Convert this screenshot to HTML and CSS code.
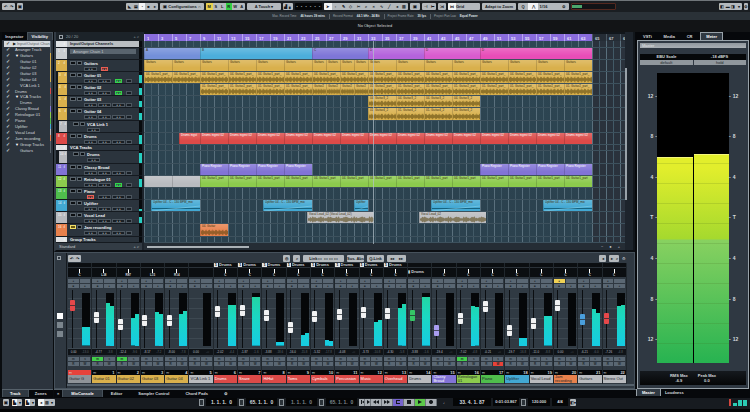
FILE: index.html
```html
<!doctype html>
<html lang="en">

<head>
    <meta charset="UTF-8" />
    <meta name="viewport" content="width=device-width, initial-scale=1.0" />
    <title>Project</title>
    <link rel="stylesheet" href="styles.css">
</head>

<body>
    <header class="toolbar">
        <div class="toolbar-left" id="tools-left"></div>
        <div class="toolbar-main" id="tools-main"></div>
        <div class="toolbar-right" id="tools-right"></div>
    </header>
    <div class="info-line">
        <span>Max. Record Time <b>46 hours 39 mins</b></span>
        <span>Record Format <b>44.1 kHz - 24 Bit</b></span>
        <span>Project Frame Rate <b>30 fps</b></span>
        <span>Project Pan Law <b>Equal Power</b></span>
    </div>
    <div class="status-line">No Object Selected</div>

    <main class="workspace">
        <aside class="zone left-zone">
            <nav class="tabs">
                <button type="button">Inspector</button>
                <button type="button" class="active">Visibility</button>
            </nav>
            <div class="visibility" id="visibility"></div>
            <nav class="tabs bottom-tabs">
                <button type="button" class="active">Track</button>
                <button type="button">Zones</button>
            </nav>
        </aside>

        <section class="zone center-zone">
            <div class="arrange">
                <div class="track-list">
                    <div class="track-list-head"><i class="mini-box"></i><span>20 / 20</span><span class="push">+ ⌕</span></div>
                    <div class="rows" id="tracks"></div>
                    <div class="track-list-foot"><span>Standard</span><span class="push">+ ⌕</span></div>
                </div>
                <div class="timeline">
                    <div class="ruler" id="ruler"></div>
                    <div class="rows lanes" id="lanes"></div>
                    <div class="h-scroll"><i></i><span>−</span><span>●</span><span>+</span></div>
                    <div class="playhead"></div>
                </div>
                <div class="v-scroll"><i></i></div>
            </div>
            <div class="mixer">
                <div class="mixer-side">
                    <i class="mini-box"></i>
                    <button type="button" class="lit" aria-label="Faders"></button>
                    <button type="button" aria-label="Inserts"></button>
                    <button type="button" aria-label="Sends"></button>
                </div>
                <div class="mixer-body">
                    <div class="mixer-bar" id="mixer-bar"></div>
                    <div class="channels" id="channels"></div>
                </div>
            </div>
            <nav class="tabs bottom-tabs">
                <button type="button">×</button>
                <button type="button" class="active">MixConsole</button>
                <button type="button">Editor</button>
                <button type="button">Sampler Control</button>
                <button type="button">Chord Pads</button>
                <button type="button">⚙</button>
            </nav>
        </section>

        <aside class="zone right-zone">
            <nav class="tabs">
                <button type="button">VSTi</button>
                <button type="button">Media</button>
                <button type="button">CR</button>
                <button type="button" class="active">Meter</button>
            </nav>
            <div class="meter-panel">
                <div class="meter-name">Master</div>
                <div class="meter-scale"><span>EBU Scale</span><span>-18 dBFS</span></div>
                <div class="meter-buttons">
                    <button type="button">default</button>
                    <button type="button">hold</button>
                </div>
                <div class="big-meter">
                    <ol class="scale"><li>12</li><li>8</li><li>4</li><li>T</li><li>4</li><li>8</li><li>12</li></ol>
                    <div class="bars">
                        <div class="bar left-bar"></div>
                        <div class="bar right-bar"></div>
                    </div>
                    <ol class="scale scale-right"><li>12</li><li>8</li><li>4</li><li>T</li><li>4</li><li>8</li><li>12</li></ol>
                </div>
                <div class="meter-read">
                    <div>RMS Max<br>-6.9</div>
                    <div>Peak Max<br>0.0</div>
                </div>
            </div>
            <nav class="tabs bottom-tabs">
                <button type="button" class="active">Master</button>
                <button type="button">Loudness</button>
            </nav>
        </aside>
    </main>

    <footer class="transport">
        <div class="transport-left" id="transport-left"></div>
        <div class="transport-main">
            <i class="locator"></i><output class="time">1. 1. 1.&nbsp; 0</output>
            <i class="locator"></i><output class="time">65. 1. 1.&nbsp; 0</output>
            <i class="locator"></i><output class="time dim">1. 1. 1.&nbsp; 0</output>
            <i class="locator"></i><output class="time dim">65. 1. 1.&nbsp; 0</output>
            <div class="transport-buttons" id="transport-buttons"></div>
            <span class="note">♩</span>
            <output class="time position">33. 4. 1. 87</output>
            <output class="time clock">0:01:03.867</output>
            <i class="locator"></i><output class="time tempo">120.000</output>
            <output class="time sign">4/4</output>
            <button type="button" class="tool">◧▾</button>
        </div>
        <div class="mini-meter"><i></i><i></i><i></i></div>
    </footer>
    <script src="script.js"></script>
</body>

</html>
```

FILE: styles.css
```css
* {
    box-sizing: border-box;
}

body {
    margin: 0;
    min-height: 100vh;
    display: flex;
    flex-direction: column;
    background: #07090c;
    color: #d5dade;
    font-family: "Liberation Sans", Arial, sans-serif;
    font-size: 4px;
    line-height: 5px;
    overflow: hidden;
}

button {
    font: inherit;
    color: inherit;
    background: none;
    border: 0;
    padding: 0;
    margin: 0;
    white-space: nowrap;
    overflow: hidden;
}

svg {
    display: block;
}

/* top toolbar */
.toolbar {
    height: 12px;
    border-top: 1px solid #70767a;
    background: #1a1e22;
    display: flex;
    align-items: center;
    padding: 0 2px;
}

.toolbar-left {
    width: 124px;
}

.toolbar-left,
.toolbar-main,
.toolbar-right,
.transport-left {
    display: flex;
    gap: 2px;
}

.toolbar-right {
    margin-left: auto;
}

.tool {
    height: 7px;
    flex: none;
    background: #b4b9bd;
    color: #15191d;
    border-radius: 1px;
    display: flex;
    align-items: center;
    justify-content: space-around;
    font-weight: bold;
    line-height: 7px;
}

.tool.dark {
    background: #050607;
    color: #9aa0a4;
}

.tool span {
    flex: 1;
    height: 7px;
    text-align: center;
}

.tool .yellow {
    background: #e8d050;
}

.tool .green {
    background: #35cf45;
}

.tool .white {
    background: #f4f5f6;
}

.perf {
    width: 45px;
    background: #121316;
    border: 1px solid #54281f;
    justify-content: flex-start;
}

.perf i {
    width: 10px;
    height: 3px;
    background: #4ba66b;
}

.info-line {
    height: 8px;
    background: #2a3137;
    display: flex;
    justify-content: center;
    align-items: center;
    gap: 4px;
    color: #9ba2a7;
    font-size: 3px;
}

.info-line span + span {
    border-left: 1px solid #596066;
    padding-left: 3px;
}

.info-line b {
    color: #dde1e4;
    margin-left: 3px;
}

.status-line {
    height: 12px;
    background: #121416;
    text-align: center;
    line-height: 11px;
    color: #d8dbdd;
}

/* zones */
.workspace {
    flex: 1;
    display: grid;
    grid-template-columns: 54px minmax(0, 1fr) 114px;
    min-height: 0;
}

.zone {
    display: flex;
    flex-direction: column;
    min-width: 0;
}

.left-zone {
    border-left: 2px solid #090c0f;
    border-right: 1px solid #090c0f;
    background: #2c343d;
}

.tabs {
    display: flex;
    flex: none;
    height: 8px;
    background: #06080b;
    font-weight: bold;
}

.tabs button {
    padding: 0 4px;
}

.tabs .active {
    background: #303942;
    border: 1px solid #46515a;
    border-bottom: 0;
    line-height: 6px;
    color: #fff;
}

.left-zone .tabs button {
    flex: 1;
    padding: 0 2px;
}

.bottom-tabs {
    margin-top: auto;
    height: 9px;
}

.bottom-tabs button {
    height: 7px;
}

.center-zone .bottom-tabs button {
    padding: 0 8px;
}

.center-zone .bottom-tabs button:first-child {
    padding: 0 3px;
}

.left-zone .bottom-tabs,
.center-zone .bottom-tabs {
    border-top: 1px solid #56616a;
}

.bottom-tabs .active {
    border-top: 0;
}

/* visibility list */
.visibility {
    height: 114px;
    padding: 1px 2px;
    display: grid;
    grid-auto-rows: 1fr;
}

.visibility label {
    display: flex;
    align-items: center;
    padding-left: 11px;
    border-right: 1px solid var(--color, #59636b);
    position: relative;
    white-space: nowrap;
}

.visibility label.folder::before {
    content: "▼";
    width: 5px;
    color: #fff;
}

.visibility label.child {
    padding-left: 16px;
}

.visibility label.selected {
    background: #d5dade;
    color: #5c6369;
    padding-left: 9px;
}

.visibility label.selected::before {
    content: "▶";
    width: 4px;
    color: #111;
}

.visibility input {
    appearance: none;
    position: absolute;
    left: 2px;
    width: 4px;
    height: 5px;
    margin: 0;
}

.visibility input:checked::after {
    content: "✓";
    display: block;
    font: bold 5px/5px "DejaVu Sans", sans-serif;
    color: #eef1f3;
}

.visibility .selected input::after {
    color: #111;
}

/* arrange window */
.arrange {
    flex: 1;
    display: grid;
    grid-template-columns: 86px minmax(0, 1fr) 6px;
    column-gap: 4px;
    background: #1d242c;
    border-left: 2px solid #323b44;
    border-bottom: 2px solid #0b0e12;
    margin-right: 1px;
}

.arrange > .timeline {
    margin-left: -2px;
}

.track-list,
.timeline {
    display: flex;
    flex-direction: column;
    min-width: 0;
}

.track-list {
    background: #252d35;
}

.track-list-head,
.track-list-foot {
    display: flex;
    align-items: center;
    gap: 3px;
    padding: 0 3px;
    flex: none;
    color: #98a0a6;
}

.track-list-head {
    height: 9px;
    background: #1c2329;
}

.track-list-foot {
    flex: 1;
    background: #333c45;
    color: #c7ccd0;
}

.push {
    margin-left: auto;
}

.mini-box {
    width: 4px;
    height: 4px;
    border: 1px solid #98a0a6;
}

.rows {
    height: 202px;
    display: flex;
    flex-direction: column;
}

.row {
    flex: 12 1 0;
    min-height: 0;
    min-width: 0;
}

.row.slim {
    flex-grow: 6;
}

.track {
    display: flex;
    border-bottom: 1px solid #151a20;
    background: #2b343d;
}

.track-color {
    width: 11px;
    padding: 1px 2px;
    background: var(--color);
    color: #fff;
    display: flex;
    justify-content: space-between;
    flex: none;
    line-height: 4px;
    font-size: 3px;
}

.track.child .track-color {
    border-left: 2px solid #14191e;
    padding: 1px;
}

.track.linked .track-color {
    border-left-width: 3px;
}

.track-body {
    flex: 1;
    min-width: 0;
    padding: 1px 3px;
    display: grid;
    grid-template-columns: 12px minmax(0, 1fr);
    grid-template-rows: 5px 4px;
    column-gap: 2px;
    row-gap: 1px;
}

.linked .track-body {
    padding-left: 6px;
}

.mute-solo {
    display: flex;
    gap: 1px;
}

.mute-solo button {
    flex: 1;
    height: 4px;
    background: #0b0e11;
    border: 1px solid #59636b;
}

.mute-solo .lit {
    border-color: #f2df69;
    background: #695a14;
}

.track-name {
    font-weight: bold;
    color: #eef1f3;
    white-space: nowrap;
}

.track-controls {
    grid-column: 2;
    display: grid;
    grid-template-columns: 13px 13px 13px 6px;
    gap: 1px;
}

.track-controls button {
    height: 4px;
    border: 1px solid #4c565f;
    background: #181e24;
    line-height: 2px;
    font-size: 3px;
    color: #a4abb0;
}

.track-controls .on-green {
    background: #127d2b;
    border-color: #34d34b;
    margin: 0 3px;
}

.track-controls .on-red {
    background: #741f1d;
    border-color: #e85f54;
    margin: 0 3px;
}

.track-meter {
    width: 3px;
    background: #080b0e;
    flex: none;
    display: flex;
    align-items: flex-end;
}

.track-meter i {
    width: 100%;
    height: var(--level);
    background: #26cfc2;
}

.slim .track-body {
    display: block;
    padding: 0 3px;
}

.track.header .track-body {
    background: #b9bec2;
}

.track.header .track-name {
    color: #20262b;
}

.slim .track-name {
    line-height: 5px;
    display: block;
}

.arranger-select {
    display: flex;
    height: 5px;
    width: 100%;
    background: #59646e;
    border: 0;
    border-radius: 0;
    padding: 0 3px;
    appearance: none;
    color: #c5cace;
    font: inherit;
}

.track-body.has-select {
    display: block;
}

/* timeline */
.timeline {
    --bar: 7px;
    position: relative;
    overflow: hidden;
    background: #2a323c;
}

.ruler {
    height: 9px;
    flex: none;
    border-top: 2px solid #11161b;
    display: flex;
    overflow: hidden;
    background: linear-gradient(#8a6ddd, #8a6ddd) 0 0 / calc(var(--bar) * 64) 100% no-repeat #252d36;
}

.ruler span {
    width: calc(var(--bar) * 2);
    flex: none;
    border-left: 1px solid #b9a7ee;
    padding-left: 2px;
    line-height: 9px;
    color: #f0ecff;
    font-weight: bold;
}

.ruler .after {
    border-color: #4b5761;
    color: #ccd1d5;
}

.lanes {
    background:
        linear-gradient(90deg, #5a707d 1px, transparent 1px) 0 0 / calc(var(--bar) * 2) 100%,
        linear-gradient(90deg, #425a67 1px, transparent 1px) 0 0 / var(--bar) 100%,
        linear-gradient(#2d4653, #2b414e) 0 0 / calc(var(--bar) * 64) 100% no-repeat;
}

.lane {
    position: relative;
    border-bottom: 1px solid #3d515d;
}

.clip {
    position: absolute;
    top: 0;
    bottom: 0;
    left: calc(var(--start) * var(--bar));
    width: calc(var(--length) * var(--bar));
    background: linear-gradient(rgba(255, 255, 255, 0.18), transparent 70%), var(--color);
    border-left: 1px solid rgba(0, 0, 0, 0.15);
    white-space: nowrap;
    color: #3c3110;
    padding-left: 1px;
    font-size: 3px;
    line-height: 5px;
}

.clip.light {
    color: #fff;
}

.clip svg {
    position: absolute;
    left: 0;
    bottom: 0;
    width: 100%;
    height: 7px;
}

.playhead {
    position: absolute;
    top: 9px;
    bottom: 6px;
    left: calc(var(--bar) * 33 - 2px);
    width: 1px;
    background: rgba(180, 194, 203, 0.7);
}

.h-scroll {
    flex: 1;
    background: #252d35;
    display: flex;
    align-items: center;
    gap: 6px;
    padding: 0 5px 0 3px;
    color: #cfd4d8;
}

.h-scroll i {
    width: 102px;
    height: 2px;
    background: #aab1b6;
    margin-right: auto;
}

.v-scroll {
    padding-top: 36px;
    margin-left: -4px;
    border-right: 2px solid #11161b;
}

.v-scroll i {
    display: block;
    width: 2px;
    height: 132px;
    background: #98a1a8;
}

/* mixer */
.mixer {
    height: 137px;
    flex: none;
    display: flex;
    background: #2f3841;
    border: 1px solid #46515b;
    margin-right: 1px;
}

.mixer-side {
    width: 12px;
    padding: 3px 2px;
    display: flex;
    flex-direction: column;
    gap: 3px;
    border-right: 1px solid #151a1f;
}

.mixer-side .mini-box {
    margin-bottom: 50px;
}

.mixer-side button {
    width: 6px;
    height: 6px;
    background: #7b858d;
}

.mixer-side .lit {
    background: #fff;
}

.mixer-body {
    flex: 1;
    min-width: 0;
    display: flex;
    flex-direction: column;
}

.mixer-bar {
    height: 10px;
    display: flex;
    align-items: center;
    gap: 3px;
    padding: 0 8px 0 1px;
}

.mixer-bar .tool:nth-child(2) {
    margin-left: 199px;
}

.mixer-bar .end {
    margin-left: auto;
}

.channels {
    display: flex;
    padding: 0 7px 0 1px;
    border-bottom: 2px solid #55616b;
    height: 123px;
}

.channel {
    flex: 1;
    min-width: 0;
    border-right: 1px solid #20272d;
    display: flex;
    flex-direction: column;
}

.channel-pan {
    height: 14px;
    background: #0b0e11;
    display: grid;
    grid-template-rows: 5px 9px;
    font-weight: bold;
    white-space: nowrap;
    overflow: hidden;
}

.route {
    border-bottom: 1px solid #2a3138;
    line-height: 4px;
}

.route b {
    background: #e2e5e7;
    color: #111;
    padding: 0 1px;
    margin-right: 1px;
}

.pan {
    text-align: center;
    line-height: 4px;
    font-size: 3px;
}

.pan i {
    display: block;
    width: 1px;
    height: 4px;
    margin: 1px auto 0;
    background: #fff;
}

.pan-group {
    font-size: 4px;
    line-height: 8px;
}

.grid-buttons {
    display: grid;
    grid-template-columns: 1fr 1fr;
    gap: 1px;
    padding: 2px 1px 1px 0;
    height: 12px;
}

.grid-buttons button {
    background: #5a6773;
    color: #20272d;
    line-height: 4px;
    font-weight: bold;
    font-size: 3px;
}

.grid-buttons .on-green {
    background: #43cf4b;
}

.grid-buttons .on-red {
    background: #e84238;
}

.grid-buttons .on-yellow {
    background: #f0d255;
}

.strip {
    height: 60px;
    display: flex;
    padding: 1px 1px 1px 0;
    background: repeating-linear-gradient(#303a43 0 9px, #3d4851 9px 10px);
}

.fader-slot {
    width: 14px;
    padding-left: 1px;
}

.fader {
    appearance: none;
    writing-mode: vertical-lr;
    direction: rtl;
    display: block;
    width: 6px;
    height: 58px;
    margin: 0;
    background: linear-gradient(#0b0e11, #0b0e11) center / 1px 100% no-repeat;
}

.fader::-webkit-slider-thumb {
    appearance: none;
    width: 5px;
    height: 11px;
    border-radius: 1px;
    background: linear-gradient(transparent 5px, rgba(30, 35, 40, 0.7) 5px 6px, transparent 6px), var(--cap, #f1f2f3);
}

.meter {
    width: 8px;
    margin: 3px 0 2px;
    background: #050709;
    display: flex;
    align-items: flex-end;
}

.meter i {
    flex: 1;
    height: var(--level);
    background: linear-gradient(to top, #16cbe3, #1bd7c2 55%, #24d49b);
    background-size: 100% 53px;
    background-position: bottom;
}

.values {
    display: flex;
    justify-content: space-around;
    height: 6px;
    background: #0f1317;
    color: #b9bfc4;
    font-size: 3px;
    line-height: 6px;
}

.values span + span {
    color: #5f686f;
}

.channel-index {
    display: flex;
    justify-content: space-between;
    margin-top: 3px;
    padding: 0 1px;
    height: 5px;
    background: #050709;
    font-weight: bold;
    line-height: 5px;
}

.channel-index.selected {
    background: #e6433b;
}

.channel-name {
    height: 8px;
    padding: 0 1px;
    background: var(--color);
    color: #20242a;
    display: grid;
    align-items: center;
    line-height: 4px;
}

.channel-name.light {
    color: #fff;
}

/* right zone */
.right-zone .tabs:first-child {
    justify-content: space-between;
    padding-left: 3px;
    padding-right: 27px;
}

.right-zone .tabs .active {
    border-color: #98a2a9;
    padding: 0 5px;
}

.meter-panel {
    flex: 1;
    display: flex;
    flex-direction: column;
    background: #2f3842;
    border: 1px solid #98a2a9;
    margin: 0 1px;
    padding: 2px;
}

.meter-name {
    background: linear-gradient(#90979d, #aab0b5);
    height: 5px;
    margin-bottom: 6px;
    color: #e4e7e9;
    padding-left: 2px;
}

.meter-scale {
    display: grid;
    grid-template-columns: 1fr 1fr;
    background: #06080a;
    height: 6px;
    text-align: center;
    font-weight: bold;
}

.meter-buttons {
    display: grid;
    grid-template-columns: 1fr 1fr;
    gap: 1px;
    margin-bottom: 8px;
}

.meter-buttons button {
    height: 5px;
    background: #90979d;
    color: #20262b;
    line-height: 5px;
}

.big-meter {
    flex: 1;
    display: grid;
    grid-template-columns: 17px minmax(0, 1fr) 17px;
}

.scale {
    list-style: none;
    margin: 0;
    padding: 3px 0;
    display: grid;
    grid-auto-rows: 1fr;
    align-items: center;
    text-align: right;
    font-size: 5px;
    font-weight: bold;
}

.scale li::after {
    content: "-";
    margin-left: 2px;
}

.scale-right {
    text-align: left;
}

.scale-right li::after {
    content: none;
}

.scale-right li::before {
    content: "-";
    margin-right: 2px;
}

.bars {
    background: #000;
    display: grid;
    grid-template-columns: 1fr 1fr;
    gap: 1px;
    align-items: end;
}

.bar {
    height: 71%;
    background:
        repeating-linear-gradient(to top, transparent 0 19px, rgba(60, 90, 20, 0.15) 19px 20px),
        linear-gradient(to top, #27b351, #88d160 123px, #a5d92e 124px, #e2ee2c 195px);
    border-top: 1px solid #f5f77a;
}

.right-bar {
    height: 72%;
}

.meter-read {
    display: flex;
    justify-content: center;
    gap: 10px;
    height: 14px;
    margin: 8px 0 1px;
    padding-top: 2px;
    background: linear-gradient(#15191e, #050607);
    text-align: center;
    font-weight: bold;
}

/* transport */
.transport {
    height: 14px;
    display: flex;
    align-items: center;
    padding: 0 3px 3px;
    background: #171b20;
    border-bottom: 3px solid #030405;
}

.transport-left {
    width: 196px;
    gap: 3px;
}

.transport-main {
    display: flex;
    align-items: center;
    gap: 2px;
}

.locator {
    width: 5px;
    height: 7px;
    border: 1px solid #8c9499;
    background: #2c3339;
}

.time {
    width: 31px;
    height: 8px;
    background: #050607;
    font-weight: bold;
    font-size: 5px;
    line-height: 8px;
    text-align: center;
    white-space: nowrap;
}

.time.dim {
    color: #7e868c;
}

.time.position {
    width: 38px;
}

.time.clock {
    width: 26px;
    font-size: 4px;
}

.time.tempo,
.time.sign {
    width: 22px;
    font-size: 4px;
}

.time.sign {
    width: 16px;
}

.note {
    width: 12px;
    text-align: center;
}

.transport-buttons {
    display: flex;
    background: #aab0b5;
}

.transport-buttons button {
    height: 7px;
    width: 11px;
    border-right: 1px solid #6e757b;
    display: grid;
    place-items: center;
}

.transport-buttons .narrow {
    width: 6px;
}

.transport-buttons .cycle {
    background: #7765cd;
}

.transport-buttons .play {
    background: #5dc84a;
}

.mini-meter {
    margin-left: auto;
    display: flex;
    align-items: flex-end;
    gap: 1px;
    height: 7px;
    border-left: 2px solid #d5463e;
    padding-left: 2px;
}

.mini-meter i {
    width: 4px;
    height: 6px;
    background: #2bcbb4;
}

.mini-meter i:first-child {
    height: 3px;
}
```

FILE: script.js
```js
const GOLD = '#d9b04c';
const RED = '#dc4a48';
const GRAY = '#b9bbbf';
const PURPLE = '#8273d6';
const LIME = '#8ccb4d';
const GREEN = '#4fbd4c';
const BLUE = '#42a8d3';
const ORANGE = '#e8814c';

// splits a range of bars into equal parts carrying the same label
function parts(start, end, step, label, extra) {
    const list = [];
    for (let bar = start; bar < end; bar += step) {
        list.push(Object.assign({ start: bar, length: Math.min(step, end - bar), label: label }, extra));
    }
    return list;
}

const wave = { wave: true };
const tracks = [
    { name: 'Input/Output Channels', slim: true, header: true, color: '#dfe2e4' },
    {
        name: '', select: true, color: '#c9cdd0', clips: [
            { start: 0, length: 8, label: 'A', color: '#7390d9' },
            { start: 8, length: 16, label: 'B', color: '#4caedb' },
            { start: 24, length: 8, label: 'C', color: '#7e76d8' },
            { start: 32, length: 8, label: 'D', color: '#b463dc' },
            { start: 40, length: 8, label: 'D', color: '#d95bcf' },
            { start: 48, length: 16, label: 'D', color: '#e84db8' }
        ]
    },
    { name: 'Guitars', color: GOLD, red: 1, few: 2, clips: [].concat(parts(0, 24, 4, 'Guitars'), parts(24, 32, 2, 'Guitars'), parts(32, 64, 4, 'Guitars')) },
    { name: 'Guitar 01', color: GOLD, child: true, green: 2, level: 75, clips: parts(0, 64, 4, '04. Guitar1_part_', wave) },
    { name: 'Guitar 02', color: GOLD, child: true, green: 2, level: 65, clips: [].concat(parts(8, 24, 4, '01. Guitar2_part_', wave), parts(24, 32, 2, 'Guitar2', wave), parts(32, 64, 4, '01. Guitar2_part_', wave)) },
    { name: 'Guitar 03', color: GOLD, child: true, level: 60, clips: parts(32, 48, 4, '04. Guitar3_2', wave) },
    { name: 'Guitar 04', color: GOLD, child: true, level: 55, clips: parts(32, 48, 4, '01. Guitar4_2', wave) },
    { name: 'VCA Link 1', color: GRAY, child: true, linked: true, few: 1, clips: [] },
    { name: 'Drums', color: RED, level: 80, light: true, clips: [].concat(parts(5, 8, 3, 'Drums ingst'), parts(8, 64, 4, 'Drums ingest 02')) },
    { name: 'VCA Tracks', slim: true, color: '#dfe2e4' },
    { name: 'Drums', color: GRAY, child: true, linked: true, few: 1, level: 85, clips: [] },
    { name: 'Classy Broad', color: PURPLE, light: true, clips: [].concat(parts(8, 24, 4, 'Piano Register'), parts(48, 64, 4, 'Piano Register')) },
    { name: 'Retrologue 01', color: LIME, green: 2, level: 75, clips: [].concat(parts(0, 8, 4, '', { color: GRAY }), parts(8, 64, 4, '04. Guitar1_part')) },
    { name: 'Piano', color: GREEN, red: 0, clips: [] },
    {
        name: 'Uplifter', color: BLUE, level: 20, clips: [
            { start: 1, length: 7 }, { start: 17, length: 7 }, { start: 30, length: 2 },
            { start: 41, length: 7 }, { start: 57, length: 7 }
        ].map(clip => Object.assign(clip, { label: clip.length > 2 ? 'Uplifter 04 - C - 130 BPM_mix' : 'Uplifter', line: true }))
    },
    {
        name: 'Vocal Lead', color: GRAY, level: 60, clips: [
            { start: 23.3, length: 9.6, label: 'Vocal Lead_02 (Vocal Lead_02)', wave: true },
            { start: 39.3, length: 9.6, label: 'Vocal Lead_02', wave: true }
        ]
    },
    { name: 'Jam recording', color: ORANGE, solo: true, clips: [{ start: 8, length: 4, label: '04. Guitar', wave: true }] },
    { name: 'Group Tracks', slim: true, color: '#dfe2e4' }
];

function waveSvg(seed) {
    let top = '';
    let bottom = '';
    for (let x = 0; x <= 56; x++) {
        const amp = 1 + Math.abs(Math.sin(x * 1.7 + seed) * Math.cos(x * 0.45 + seed)) * 2.4;
        top += (x ? 'L' : 'M') + x + ' ' + (3.5 - amp).toFixed(1);
        bottom = 'L' + x + ' ' + (3.5 + amp).toFixed(1) + bottom;
    }
    return '<svg viewBox="0 0 56 7" preserveAspectRatio="none" aria-hidden="true"><path d="' + top + bottom + 'Z" fill="#53410d" fill-opacity=".55"/></svg>';
}

function renderControls(track) {
    if (track.slim) {
        return '<span class="track-name">' + track.name + '</span>';
    }
    if (track.select) {
        return '<select class="arranger-select" aria-label="Arranger chain"><option>Arranger Chain 1</option></select>';
    }
    let boxes = '';
    for (let i = 0; i < (track.few || 4); i++) {
        const state = track.green === i ? 'on-green' : track.red === i ? 'on-red' : '';
        boxes += '<button type="button" class="' + state + '" aria-label="Control ' + (i + 1) + '">' + (i === 3 ? '' : '●&nbsp;●') + '</button>';
    }
    return '<div class="mute-solo"><button type="button" aria-label="Mute" class="' + (track.solo ? 'lit' : '') + '"></button><button type="button" aria-label="Solo"></button></div>' +
        '<span class="track-name">' + track.name + '</span><div class="track-controls">' + boxes + '</div>';
}

document.getElementById('tracks').innerHTML = tracks.map((track, i) => {
    const names = ['row', 'track'];
    ['slim', 'header', 'child', 'linked'].forEach(key => { if (track[key]) names.push(key); });
    return '<div class="' + names.join(' ') + '" style="--color:' + track.color + '">' +
        '<div class="track-color"><span>' + (track.slim ? '' : i) + '</span><span>ıl</span></div>' +
        '<div class="track-body' + (track.select ? ' has-select' : '') + '">' + renderControls(track) + '</div>' +
        '<div class="track-meter"><i style="--level:' + (track.level || 0) + '%"></i></div></div>';
}).join('');

document.getElementById('lanes').innerHTML = tracks.map(track => {
    const clips = (track.clips || []).map(clip => {
        let art = clip.wave ? waveSvg(clip.start) : '';
        if (clip.line) {
            art = '<svg viewBox="0 0 56 7" preserveAspectRatio="none" aria-hidden="true"><path d="M0 4H56V5H0Z" fill="#17637f"/><path d="M0 7L56 2" stroke="#8fd3ea" stroke-width=".6"/></svg>';
        }
        return '<div class="clip' + (track.light ? ' light' : '') + '" style="--start:' + clip.start + ';--length:' + clip.length +
            ';--color:' + (clip.color || track.color) + '">' + art + clip.label + '</div>';
    }).join('');
    return '<div class="row lane' + (track.slim ? ' slim' : '') + '">' + clips + '</div>';
}).join('');

let ruler = '';
for (let bar = 1; bar < 71; bar += 2) {
    ruler += '<span class="' + (bar > 64 ? 'after' : '') + '">' + bar + '</span>';
}
document.getElementById('ruler').innerHTML = ruler;

// visibility: name, indent kind, colour
const visible = [
    ['Input/Output Chan', 'selected folder'], ['Arranger Track', ''], ['Guitars', 'folder', GOLD],
    ['Guitar 01', 'child', GOLD], ['Guitar 02', 'child', GOLD], ['Guitar 03', 'child', GOLD], ['Guitar 04', 'child', GOLD],
    ['VCA Link 1', 'child'], ['Drums', '', RED], ['VCA Tracks', 'folder'], ['Drums', 'child'],
    ['Classy Broad', '', PURPLE], ['Retrologue 01', '', LIME], ['Piano', '', GREEN], ['Uplifter', '', BLUE],
    ['Vocal Lead', '', GRAY], ['Jam recording', '', ORANGE], ['Group Tracks', 'folder'], ['Guitars', 'child']
];
document.getElementById('visibility').innerHTML = visible.map(item =>
    '<label class="' + item[1] + '"' + (item[2] ? ' style="--color:' + item[2] + '"' : '') + '><input type="checkbox" checked />' + item[0] + '</label>'
).join('');

// mixer: name, colour, fader, left level, right level, value
const channels = [
    ['Guitar G', '#8f9499', 78, 35, 35, '0.00'],
    ['Guitar 01', GOLD, 54, 81, 76, '-4.77'],
    ['Guitar 02', GOLD, 38, 52, 61, '-12.4'],
    ['Guitar 03', GOLD, 46, 64, 61, '-8.17'],
    ['Guitar 04', GOLD, 47, 61, 66, '-8.00'],
    ['VCA Link 1', GRAY, null, 0, 0, '0.00'],
    ['Drums', RED, 67, 78, 78, '-2.02'],
    ['Snare', RED, 69, 92, 92, '-1.87'],
    ['HiHat', RED, 58, 7, 7, '-3.88'],
    ['Toms', RED, 31, 21, 25, '-16.0'],
    ['Cymbals', RED, 55, 11, 10, '-5.32'],
    ['Percussion', RED, 59, 0, 0, '-4.08'],
    ['Music', RED, 63, 46, 50, '-3.73'],
    ['Overhead', RED, 61, 71, 79, '-4.30'],
    ['Drums', GRAY, 58, 92, 92, '-3.88'],
    ['Classy Broad', PURPLE, 25, 0, 0, '-19.4'],
    ['Retrologue 01', LIME, 51, 76, 73, '-7.02'],
    ['Piano', GREEN, 76, 0, 0, '-0.21'],
    ['Uplifter', BLUE, 25, 16, 16, '-19.7'],
    ['Vocal Lead', GRAY, 41, 56, 56, '-11.0'],
    ['Jam recording', ORANGE, 78, 0, 0, '0.00'],
    ['Guitars', GRAY, 49, 70, 63, '-6.21'],
    ['Stereo Out', GRAY, 52, 76, 78, '-7.26']
];
const caps = { 0: '#e5484a', 14: '#35c766', 15: '#a99df0', 21: '#4a9fdc', 22: '#e5484a' };
const pans = ['C', 'L38', 'R87', 'L15', 'R14', ''];
const lit = { 1: [0, 'on-green'], 2: [0, 'on-green'], 16: [0, 'on-green'], 17: [3, 'on-red'] };

function gridButtons(texts, index, state) {
    return '<div class="grid-buttons">' + texts.map((text, i) =>
        '<button type="button" class="' + (index === i ? state : '') + '">' + text + '</button>').join('') + '</div>';
}

document.getElementById('channels').innerHTML = channels.map((ch, i) => {
    const light = ch[1] === RED || ch[1] === PURPLE;
    const on = lit[i] || [];
    const pan = i === 14 ? '<div class="pan-group"><b>▮</b> Drums</div>'
        : '<div class="pan">' + (i === 5 ? '' : '<i></i>') + (pans[i] === undefined ? 'C' : pans[i]) + '</div>';
    const fader = ch[2] === null ? ''
        : '<input type="range" class="fader" aria-label="' + ch[0] + ' level" value="' + ch[2] + '"' + (caps[i] ? ' style="--cap:' + caps[i] + '"' : '') + ' />';
    return '<div class="channel" style="--color:' + ch[1] + '">' +
        '<div class="channel-pan"><div class="route">' + (i > 5 && i < 14 ? '<b>1</b>Drums' : '') + '</div>' + pan + '</div>' +
        gridButtons(['●', '', '■', '●'], i === 20 ? 0 : -1, 'on-yellow') +
        '<div class="strip"><div class="fader-slot">' + fader + '</div>' +
        '<div class="meter"><i style="--level:' + ch[3] + '%"></i><i style="--level:' + ch[4] + '%"></i></div></div>' +
        '<div class="values"><span>' + ch[5] + '</span><span>' + (ch[3] ? '-' + (20 - ch[3] / 5).toFixed(1) : '-∞') + '</span></div>' +
        gridButtons(['m', 's', 'R', 'W'], on[0], on[1]) +
        '<div class="channel-index' + (i ? '' : ' selected') + '"><span>∞</span><span>' + (i || '') + '</span></div>' +
        '<div class="channel-name' + (light ? ' light' : '') + '">' + ch[0] + '</div></div>';
}).join('');

// toolbar groups: width, cells, extra class
function tool(width, cells, extra) {
    const inner = cells.map(cell => Array.isArray(cell) ? '<span class="' + cell[1] + '">' + cell[0] + '</span>' : '<span>' + cell + '</span>').join('');
    return '<button type="button" class="tool ' + (extra || '') + '" style="width:' + width + 'px">' + inner + '</button>';
}

document.getElementById('tools-left').innerHTML = tool(13, ['↶', '↷']) + tool(6, ['▣']);
document.getElementById('tools-main').innerHTML =
    tool(32, ['◣', '▤', ['◔', 'white'], '■', '▸']) +
    tool(44, ['▣ Configurations ∩']) +
    tool(39, [['M', 'yellow'], 'S', 'L', ['R', 'green'], 'W', 'A']) +
    tool(34, ['A Touch ▾']) +
    tool(10, ['▟', '▖']) +
    tool(27, ['▪', '▪', '▪', '▪', '▪', '▪'], 'dark') +
    tool(84, [['➤', 'white'], '▫', '✎', '◇', '✂', '⌕', '×', '∿', '╱', '◂', '▥']) +
    tool(10, ['▣']) + tool(14, ['⊣', '⊢']) + tool(8, ['⋊']) + tool(32, [['⋈', 'white'], 'Grid', '', '']) +
    tool(34, ['Adapt to Zoom']) + tool(51, ['Q', ['⋀', 'white'], '1/16', '', '⚙']) +
    '<div class="tool perf"><i></i></div>';
document.getElementById('tools-right').innerHTML = tool(23, ['◧', '▬', '◨', '▾']) + tool(4, ['⚙']);
document.getElementById('mixer-bar').innerHTML = tool(13, ['↶', '↷']) +
    tool(7, ['◎']) + tool(7, ['⌕']) + tool(41, ['Link ▭ ▭ ▭ ▭']) + tool(17, ['Sus. Abs']) + tool(17, ['Q-Link']) + tool(19, ['◂◂', '▸▸']) +
    tool(7, ['◂'], 'end') + tool(10, ['▸', '⌕']) + '<span>⚙</span>';
document.getElementById('transport-left').innerHTML = tool(6, ['▣']) + tool(10, [['▙', 'white'], '▾']) + tool(10, [['▙', 'white'], '▾']) + tool(17, [['◂', 'white'], '▥', '▾']);

// transport icons, drawn on an 8 x 6 box
const transport = [
    ['narrow', 'Start', 'M2 1h1v4H2zM6 1v4L3 3z'],
    ['narrow', 'End', 'M5 1h1v4H5zM2 1v4l3-2z'],
    ['', 'Rewind', 'M4 1v4L1 3zM7 1v4L4 3z'],
    ['', 'Forward', 'M1 1v4l3-2zM4 1v4l3-2z'],
    ['cycle', 'Cycle', 'M2 1h4v1H3v2h3v1H2z'],
    ['', 'Stop', 'M2 1h4v4H2z'],
    ['play', 'Play', 'M2 1v4l4-2z'],
    ['', 'Record', 'M4 1a2 2 0 1 0 .01 0z']
];
document.getElementById('transport-buttons').innerHTML = transport.map(t =>
    '<button type="button" class="' + t[0] + '" aria-label="' + t[1] + '"><svg width="8" height="6" viewBox="0 0 8 6"><path d="' + t[2] + '" fill="#14181c"/></svg></button>'
).join('');
```
